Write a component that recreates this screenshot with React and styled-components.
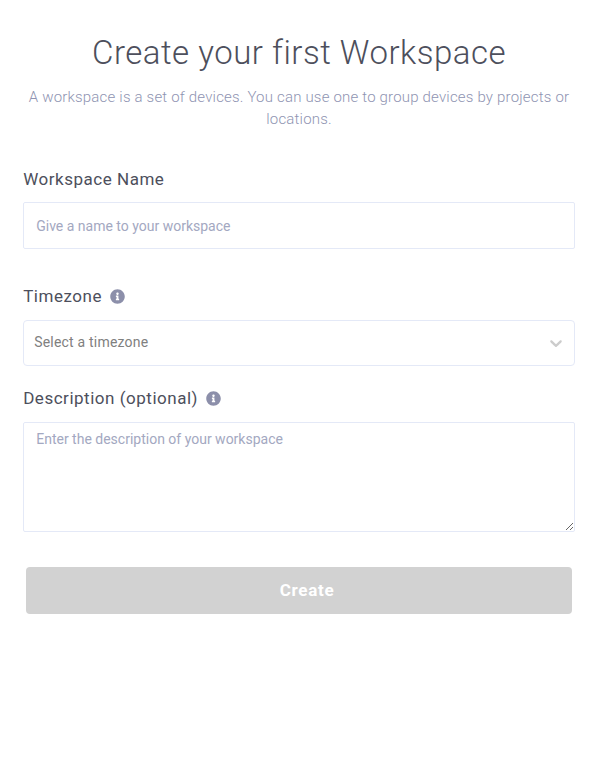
import React from "react";
import styled, { createGlobalStyle } from "styled-components";
import { FaInfoCircle } from "react-icons/fa";

const GlobalStyle = createGlobalStyle`
  * {
    box-sizing: border-box;
  }

  body {
    margin: 0;
    background-color: #ffffff;
    font-family: Roboto, sans-serif;
  }
`;

const Page = styled.main`
  min-height: 761px;
  padding: 30px 21px 0 23px;
`;

const Title = styled.h1`
  margin: 0;
  color: #4d4f5c;
  font-size: 33px;
  font-weight: 300;
  line-height: 46px;
  letter-spacing: 0.5px;
  text-align: center;
`;

const Subtitle = styled.p`
  margin: 10px 0 0;
  color: #8f94b2;
  font-size: 15px;
  font-weight: 300;
  line-height: 22px;
  letter-spacing: 0.19px;
  text-align: center;
`;

const Form = styled.form`
  display: flex;
  flex-direction: column;
  margin-top: 38px;
`;

const Field = styled.div`
  display: flex;
  flex-direction: column;
  margin-bottom: ${(props) => props.$gap}px;
`;

const Label = styled.label`
  display: flex;
  align-items: center;
  height: 22px;
  margin-bottom: ${(props) => props.$gap || 13}px;
  padding-left: 0.2px;
  color: #4d4f5c;
  font-size: 17px;
  letter-spacing: 0.52px;
`;

const InfoIcon = styled(FaInfoCircle)`
  width: 15px;
  height: 15px;
  margin-left: 8px;
  color: #8c8faa;
`;

const Input = styled.input`
  height: 47px;
  padding: 0 12.2px;
  border: 1px solid #e4e9f7;
  border-radius: 2px;
  outline: none;
  font-family: inherit;
  font-size: 14px;

  &::placeholder {
    color: #a3a8c1;
  }
`;

const Select = styled.div`
  display: flex;
  align-items: center;
  justify-content: space-between;
  height: 46px;
  padding: 0 8px 2px 10.2px;
  border: 1px solid #e4e9f7;
  border-radius: 4px;
  color: #808080;
  font-size: 14px;
  letter-spacing: 0.2px;
  cursor: pointer;
`;

const Chevron = styled.svg`
  width: 20px;
  height: 20px;
  margin-top: 2px;
  fill: #cccccc;
`;

const TextArea = styled.textarea`
  height: 110px;
  padding: 8px 12.2px;
  border: 1px solid #e4e9f7;
  border-radius: 2px;
  outline: none;
  font-family: inherit;
  font-size: 14px;
  resize: vertical;

  &::placeholder {
    color: #a3a8c1;
  }
`;

const Button = styled.button`
  height: 47px;
  margin: 0 3px;
  padding: 0 0 2px 16px;
  border: none;
  border-radius: 4px;
  background-color: #d2d2d2;
  color: #ffffff;
  font-family: inherit;
  font-size: 17px;
  font-weight: 700;
  letter-spacing: 0.7px;
`;

const App = () => {
  return (
    <>
      <GlobalStyle />
      <Page>
        <Title>Create your first Workspace</Title>
        <Subtitle>
          A workspace is a set of devices. You can use one to group devices by
          projects or locations.
        </Subtitle>
        <Form onSubmit={(e) => e.preventDefault()}>
          <Field $gap={36}>
            <Label htmlFor="name" $gap={12}>
              Workspace Name
            </Label>
            <Input
              id="name"
              name="name"
              placeholder="Give a name to your workspace"
            />
          </Field>
          <Field $gap={21}>
            <Label>
              Timezone
              <InfoIcon />
            </Label>
            <Select>
              Select a timezone
              <Chevron viewBox="0 0 20 20" aria-hidden="true">
                <path d="M4.516 7.548c0.436-0.446 1.043-0.481 1.576 0l3.908 3.747 3.908-3.747c0.533-0.481 1.141-0.446 1.574 0 0.436 0.445 0.408 1.197 0 1.615-0.406 0.418-4.695 4.502-4.695 4.502-0.217 0.223-0.502 0.335-0.787 0.335s-0.57-0.112-0.789-0.335c0 0-4.287-4.084-4.695-4.502s-0.436-1.17 0-1.615z" />
              </Chevron>
            </Select>
          </Field>
          <Field $gap={35}>
            <Label htmlFor="description">
              Description (optional)
              <InfoIcon />
            </Label>
            <TextArea
              id="description"
              name="description"
              placeholder="Enter the description of your workspace"
            />
          </Field>
          <Button type="submit" disabled>
            Create
          </Button>
        </Form>
      </Page>
    </>
  );
};

export default App;
